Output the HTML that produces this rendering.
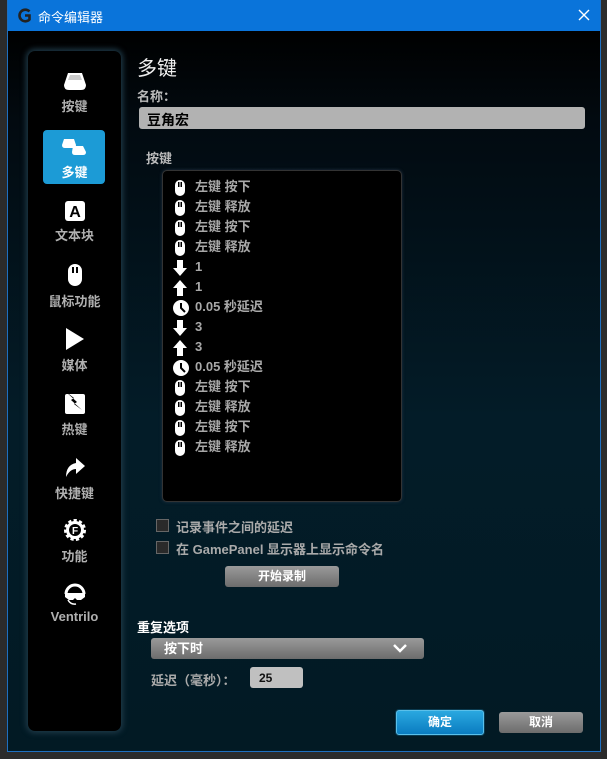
<!DOCTYPE html>
<html><head><meta charset="utf-8"><style>
*{margin:0;padding:0;box-sizing:border-box}
body{width:607px;height:759px;overflow:hidden;background:#2b2b2b;font-family:"Liberation Sans","Noto Sans CJK SC",sans-serif;position:relative}
.dlg{position:absolute;left:7px;top:0;width:594px;height:752px;border:1px solid #1e6fc0;border-top:none;background:linear-gradient(#000 30px,#020a10 120px,#031c28 420px,#021a24 760px)}
.title{position:absolute;left:0;top:0;width:100%;height:31px;background:#0a74da;color:#fff;font-size:13px}
.side{position:absolute;left:20px;top:51px;width:93px;height:680px;background:#000;border-radius:7px;box-shadow:0 0 6px 2px #1f3a48}
.it{position:absolute;left:0;width:93px;text-align:center;color:#b0b0b0;font-size:13px;font-weight:bold}
.it svg{display:block;margin:0 auto 4px}
.lbl{position:absolute;color:#bbb;font-size:13px;font-weight:bold}
.list{position:absolute;left:154px;top:170px;width:240px;height:332px;background:#000;border:1px solid #333;border-radius:5px;box-shadow:0 0 3px #234}
.row{position:absolute;left:10px;height:20px;line-height:20px;color:#a8a8a8;font-size:13px;font-weight:bold}
.row svg{position:absolute;left:0;top:3px}
.row span{position:absolute;left:22px;white-space:nowrap}
.btn{position:absolute;border-radius:3px;background:linear-gradient(#9a9a9a,#6c6c6c);color:#fff;font-size:12px;font-weight:bold;text-align:center}
.cb{position:absolute;width:13px;height:13px;border:1px solid #666;background:#2a2a2a}
</style></head><body>
<div class="dlg">
<div class="title">
<svg style="position:absolute;left:9px;top:8px" width="15" height="15" viewBox="0 0 15 15"><path d="M12.5 3.5A5.8 5.8 0 1 0 12.5 11.5V7.5H8" fill="none" stroke="#222" stroke-width="2.6"/></svg>
<span style="position:absolute;left:30px;top:7px">命令编辑器</span>
<svg style="position:absolute;right:10px;top:9px" width="12" height="12"><path d="M1 1L11 11M11 1L1 11" stroke="#fff" stroke-width="1.4"/></svg>
</div>
<div class="side">
<div class="it" style="top:19px"><svg width="24" height="22" viewBox="0 0 24 22"><path d="M5 3h14l4 12q0 5-5 5H6q-5 0-5-5z" fill="#fff"/><path d="M7 5h10l2 5H5z" fill="#ccc"/></svg>按键</div>
<div style="position:absolute;left:15px;top:79px;width:62px;height:54px;background:#1c9bd6;border-radius:4px"></div>
<div class="it" style="top:85px;color:#fff"><svg width="26" height="22" viewBox="0 0 26 22"><path d="M2 3h10l2 6q0 3-3 3H3q-3 0-3-3z" fill="#fff"/><path d="M11 10h10l3 6q0 3-3 3h-8q-3 0-3-3z" fill="#fff"/></svg>多键</div>
<div class="it" style="top:150px"><svg width="20" height="20"><rect width="20" height="20" rx="3" fill="#fff"/><text x="10" y="16" font-size="16" font-weight="bold" text-anchor="middle" fill="#000" font-family="Liberation Sans">A</text></svg>文本块</div>
<div class="it" style="top:212px"><svg width="16" height="24"><rect x="1" y="1" width="14" height="22" rx="7" fill="#fff"/><rect x="5" y="4" width="2" height="6" fill="#000"/><rect x="9" y="4" width="2" height="6" fill="#000"/></svg>鼠标功能</div>
<div class="it" style="top:276px"><svg width="20" height="24"><path d="M1 1L19 12L1 23z" fill="#fff"/></svg>媒体</div>
<div class="it" style="top:340px"><svg width="22" height="24"><rect x="1" y="3" width="20" height="20" rx="2" fill="#fff"/><path d="M1 0l9 7-3 2 11 10-8-6 3-2z" fill="#000"/></svg>热键</div>
<div class="it" style="top:404px"><svg width="22" height="24"><path d="M2 22Q2 10 12 8V3l9 8-9 8v-5Q6 14 2 22z" fill="#fff"/></svg>快捷键</div>
<div class="it" style="top:467px"><svg width="24" height="24" viewBox="0 0 24 24"><circle cx="12" cy="12" r="9" fill="#fff" stroke="#fff" stroke-width="4" stroke-dasharray="3 2.1"/><circle cx="12" cy="12" r="6" fill="#000"/><text x="12" y="16" font-size="10" font-weight="bold" text-anchor="middle" fill="#fff" font-family="Liberation Sans">F</text></svg>功能</div>
<div class="it" style="top:532px"><svg width="22" height="22" viewBox="0 0 22 22"><path d="M2 11a9 9 0 0 1 18 0" fill="none" stroke="#fff" stroke-width="3"/><path d="M1 10h20v4l-4 3h-4l-2-2-2 2H5l-4-3z" fill="#fff"/><path d="M4 17q3 5 8 4" fill="none" stroke="#fff" stroke-width="1.5"/></svg>Ventrilo</div>
</div>
<div style="position:absolute;left:129px;top:52px;color:#eee;font-size:20px">多键</div>
<div class="lbl" style="left:129px;top:86px">名称：</div>
<div style="position:absolute;left:131px;top:107px;width:446px;height:22px;background:#b2b2b2;border-radius:3px;font-size:14px;font-weight:bold;color:#000;padding:3px 0 0 8px">豆角宏</div>
<div class="lbl" style="left:138px;top:148px">按键</div>
<div class="list">
<div class="row" style="top:6px"><svg width="14" height="16"><rect x="2" y="0" width="10" height="16" rx="5" fill="#fff"/><rect x="5" y="2" width="1.5" height="5" fill="#000"/><rect x="7.5" y="2" width="1.5" height="5" fill="#000"/></svg><span>左键 按下</span></div>
<div class="row" style="top:26px"><svg width="14" height="16"><rect x="2" y="0" width="10" height="16" rx="5" fill="#fff"/><rect x="5" y="2" width="1.5" height="5" fill="#000"/><rect x="7.5" y="2" width="1.5" height="5" fill="#000"/></svg><span>左键 释放</span></div>
<div class="row" style="top:46px"><svg width="14" height="16"><rect x="2" y="0" width="10" height="16" rx="5" fill="#fff"/><rect x="5" y="2" width="1.5" height="5" fill="#000"/><rect x="7.5" y="2" width="1.5" height="5" fill="#000"/></svg><span>左键 按下</span></div>
<div class="row" style="top:66px"><svg width="14" height="16"><rect x="2" y="0" width="10" height="16" rx="5" fill="#fff"/><rect x="5" y="2" width="1.5" height="5" fill="#000"/><rect x="7.5" y="2" width="1.5" height="5" fill="#000"/></svg><span>左键 释放</span></div>
<div class="row" style="top:86px"><svg width="14" height="16"><path d="M4 0h6v8h4L7 16 0 8h4z" fill="#fff"/></svg><span>1</span></div>
<div class="row" style="top:106px"><svg width="14" height="16"><path d="M4 16h6V8h4L7 0 0 8h4z" fill="#fff"/></svg><span>1</span></div>
<div class="row" style="top:126px"><svg width="16" height="16"><circle cx="8" cy="8" r="8" fill="#fff"/><path d="M8 3v5l4 4" stroke="#000" stroke-width="2" fill="none"/></svg><span>0.05 秒延迟</span></div>
<div class="row" style="top:146px"><svg width="14" height="16"><path d="M4 0h6v8h4L7 16 0 8h4z" fill="#fff"/></svg><span>3</span></div>
<div class="row" style="top:166px"><svg width="14" height="16"><path d="M4 16h6V8h4L7 0 0 8h4z" fill="#fff"/></svg><span>3</span></div>
<div class="row" style="top:186px"><svg width="16" height="16"><circle cx="8" cy="8" r="8" fill="#fff"/><path d="M8 3v5l4 4" stroke="#000" stroke-width="2" fill="none"/></svg><span>0.05 秒延迟</span></div>
<div class="row" style="top:206px"><svg width="14" height="16"><rect x="2" y="0" width="10" height="16" rx="5" fill="#fff"/><rect x="5" y="2" width="1.5" height="5" fill="#000"/><rect x="7.5" y="2" width="1.5" height="5" fill="#000"/></svg><span>左键 按下</span></div>
<div class="row" style="top:226px"><svg width="14" height="16"><rect x="2" y="0" width="10" height="16" rx="5" fill="#fff"/><rect x="5" y="2" width="1.5" height="5" fill="#000"/><rect x="7.5" y="2" width="1.5" height="5" fill="#000"/></svg><span>左键 释放</span></div>
<div class="row" style="top:246px"><svg width="14" height="16"><rect x="2" y="0" width="10" height="16" rx="5" fill="#fff"/><rect x="5" y="2" width="1.5" height="5" fill="#000"/><rect x="7.5" y="2" width="1.5" height="5" fill="#000"/></svg><span>左键 按下</span></div>
<div class="row" style="top:266px"><svg width="14" height="16"><rect x="2" y="0" width="10" height="16" rx="5" fill="#fff"/><rect x="5" y="2" width="1.5" height="5" fill="#000"/><rect x="7.5" y="2" width="1.5" height="5" fill="#000"/></svg><span>左键 释放</span></div>
</div>
<div class="cb" style="left:148px;top:519px"></div>
<div class="lbl" style="left:168px;top:517px;color:#aaa">记录事件之间的延迟</div>
<div class="cb" style="left:148px;top:541px"></div>
<div class="lbl" style="left:168px;top:539px;color:#aaa">在 GamePanel 显示器上显示命令名</div>
<div class="btn" style="left:217px;top:566px;width:114px;height:21px;line-height:21px">开始录制</div>
<div class="lbl" style="left:129px;top:617px;color:#fff">重复选项</div>
<div class="btn" style="left:143px;top:638px;width:273px;height:21px;line-height:21px;text-align:left;padding-left:13px;font-size:13px">按下时
<svg style="position:absolute;right:17px;top:6px" width="14" height="9"><path d="M1 1l6 6 6-6" stroke="#fff" stroke-width="2.5" fill="none"/></svg></div>
<div class="lbl" style="left:143px;top:670px;color:#aaa">延迟（毫秒）：</div>
<div style="position:absolute;left:242px;top:667px;width:53px;height:21px;background:#c0c0c0;border-radius:3px;font-size:12px;font-weight:bold;color:#111;padding:4px 0 0 9px">25</div>
<div class="btn" style="left:388px;top:710px;width:88px;height:25px;line-height:23px;background:linear-gradient(#2aa8e0,#0a7cc0);border:1px solid #5ac0ea;box-shadow:0 0 0 1px #0a3a50">确定</div>
<div class="btn" style="left:491px;top:712px;width:84px;height:21px;line-height:21px">取消</div>
</div>
</body></html>
